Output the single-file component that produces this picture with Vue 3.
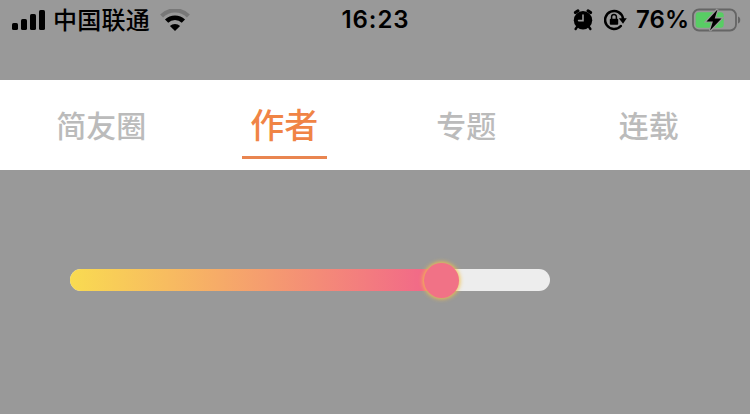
<script setup>
import { ref } from 'vue'

const tabs = ['简友圈', '作者', '专题', '连载']
const active = ref(1)
const progress = ref(77.3)
</script>

<template>
  <main class="screen">
    <header class="status">
      <div class="side">
        <svg class="signal" width="34" height="22" viewBox="0 0 34 22">
          <rect x="0" y="14" width="6" height="7" rx="1.6" />
          <rect x="9" y="10" width="6" height="11" rx="1.6" />
          <rect x="18" y="5" width="6" height="16" rx="1.6" />
          <rect x="27" y="1" width="6" height="20" rx="1.6" />
        </svg>
        <span class="carrier">中国联通</span>
        <svg class="wifi" width="30" height="22" viewBox="0 0 30 22">
          <path d="M1.6 7a18.900 18.900 0 0 1 26.800 0" fill="none" stroke="#787878" stroke-width="4.200" />
          <path d="M6.600 12.200a11.900 11.900 0 0 1 16.800 0" fill="none" stroke="#000" stroke-width="4.600" />
          <path d="M9.900 17.100a7.200 7.200 0 0 1 10.200 0L15 22z" />
        </svg>
      </div>
      <span class="time">16:23</span>
      <div class="side right">
        <svg class="alarm" width="20" height="22" viewBox="0 0 20 22">
          <path d="M2.400 3.600 5 1.800M17.600 3.600 15 1.800" stroke="#000" stroke-width="3" stroke-linecap="round" />
          <path d="M4.400 17.400 2.600 20M15.600 17.400l1.800 2.600" stroke="#000" stroke-width="2.400" stroke-linecap="round" />
          <circle cx="10" cy="11.200" r="9.200" />
          <path d="M10 6v5.600H5.600" fill="none" stroke="#999" stroke-width="1.600" stroke-linecap="round" />
        </svg>
        <svg class="lock" width="23" height="22" viewBox="0 0 23 22">
          <path d="M16.800 17A9 9 0 1 1 19 9.500" fill="none" stroke="#000" stroke-width="2.500" stroke-linecap="round" />
          <path d="M14.800 9.300h8l-3.800 5.500z" />
          <rect x="5.800" y="9.800" width="8.400" height="6" rx="1" />
          <path d="M7.600 10V7.800a2.400 2.400 0 0 1 4.800 0V10" fill="none" stroke="#000" stroke-width="1.500" />
        </svg>
        <span class="percent">76%</span>
        <svg class="battery" width="49" height="24" viewBox="0 0 49 24">
          <rect x="1" y="1.500" width="43" height="21" rx="6" fill="none" stroke="#656565" stroke-width="1.800" />
          <path d="M46 8.500v7c3-.8 3-6.200 0-7z" fill="#656565" />
          <rect x="3.700" y="4.200" width="28" height="15.600" rx="3" fill="#58cd64" />
          <path d="M25.500 1.400 14.500 13.400h6.400L18 22.600 29.500 10.400h-6.800z" stroke="#999" stroke-width="2.400" paint-order="stroke" />
        </svg>
      </div>
    </header>
    <nav class="tabs">
      <button
        v-for="(tab, i) in tabs"
        :key="tab"
        class="tab"
        :class="{ active: i === active }"
        @click="active = i"
      >
        <span class="label">{{ tab }}</span>
      </button>
    </nav>
    <section class="panel">
      <div class="track">
        <div class="fill" :style="{ width: progress + '%' }"></div>
        <div class="thumb"></div>
      </div>
    </section>
  </main>
</template>

<style>
body {
  background: #999;
}
</style>

<style scoped>
.screen {
  width: 750px;
  height: 414px;
  background: #999;
  font-family: Inter, "Noto Sans CJK SC", sans-serif;
  overflow: hidden;
}
.status {
  display: grid;
  grid-template-columns: 1fr auto 1fr;
  grid-template-rows: 40px;
  height: 40px;
  margin-bottom: 40px;
  padding: 0 9px 0 12px;
  align-items: center;
  color: #000;
  font-size: 24px;
  line-height: 40px;
}
.side {
  display: flex;
  align-items: center;
}
.right {
  justify-content: flex-end;
}
.carrier {
  margin-left: 7px;
  padding-top: 2px;
  font-weight: 500;
  line-height: 38px;
  letter-spacing: 0.25px;
}
.wifi {
  margin-left: 10px;
}
.time,
.percent {
  font-weight: 600;
}
.time {
  margin-right: 2px;
  letter-spacing: 0.9px;
}
.lock {
  margin-left: 11px;
}
.percent {
  margin: 0 3px 0 9px;
}
.tabs {
  display: flex;
  height: 90px;
  padding: 0 10px;
  box-sizing: border-box;
  background: #fff;
}
.tab {
  flex: 1;
  display: flex;
  justify-content: center;
  height: 79px;
  padding: 0;
  border: 0;
  background: none;
  color: #bbb;
  font: 500 30px/88px "Noto Sans CJK SC", sans-serif;
}
.tab.active {
  color: #f08445;
  font-size: 34px;
}
.label {
  box-sizing: border-box;
  height: 79px;
}
.active .label {
  width: 85px;
  margin-left: 1px;
  border-bottom: 3px solid #e98550;
}
.panel {
  padding: 99px 0 0 70px;
}
.track {
  display: flex;
  align-items: center;
  width: 480px;
  height: 22px;
  border-radius: 11px;
  background: #ededed;
}
.fill {
  height: 22px;
  border-radius: 11px 0 0 11px;
  background: linear-gradient(90deg, #f9db51, #f26b87 94%);
}
.thumb {
  flex: none;
  width: 35px;
  height: 35px;
  margin: 1px 0 0 -17.5px;
  border-radius: 50%;
  background: #f17286;
  box-shadow: 0 0 4px 1px #f2c14b;
}
</style>
